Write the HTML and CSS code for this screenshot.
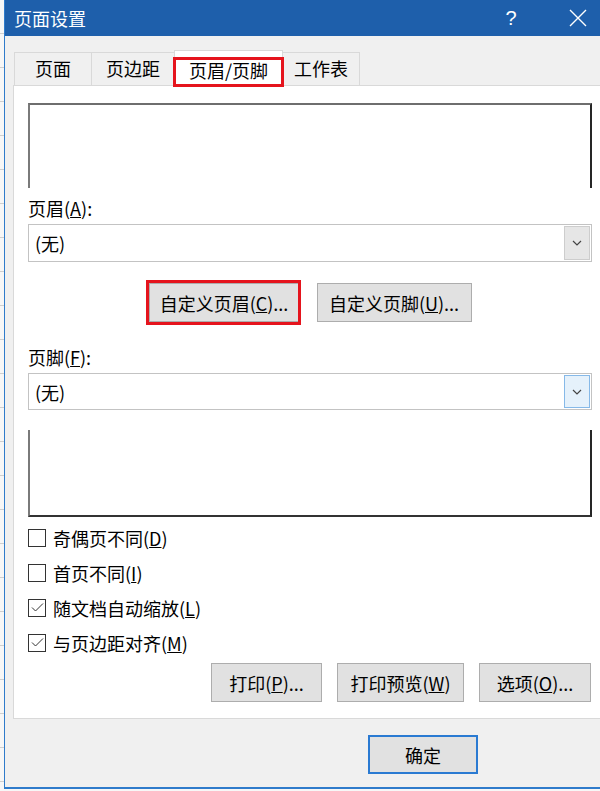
FILE: index.html
```html
<!DOCTYPE html>
<html lang="zh-CN">
<head>
    <meta charset="UTF-8">
    <meta name="viewport" content="width=device-width, initial-scale=1.0">
    <title>页面设置</title>
    <link rel="stylesheet" href="styles.css">
</head>
<body>
    <div class="dialog">
        <!-- Title bar -->
        <div class="titlebar">
            <span class="title">页面设置</span>
            <span class="title-btn help">?</span>
            <span class="title-btn close">
                <svg width="18" height="18" viewBox="0 0 18 18">
                    <path d="M1 1 L17 17 M17 1 L1 17" stroke="#fff" stroke-width="1.4" fill="none"/>
                </svg>
            </span>
        </div>

        <!-- Tabs -->
        <div class="tabs">
            <div class="tab tab-page">页面</div>
            <div class="tab tab-margin">页边距</div>
            <div class="tab tab-header active">页眉/页脚<span class="mark"></span></div>
            <div class="tab tab-sheet">工作表</div>
        </div>

        <div class="panel">
            <div class="preview preview-top"></div>

            <div class="field-label">页眉(<u>A</u>):</div>
            <div class="combo">
                <span class="combo-text">(无)</span>
                <span class="combo-btn">
                    <svg width="10" height="6" viewBox="0 0 10 6"><path d="M1 1 L5 5 L9 1" stroke="#444" stroke-width="1.2" fill="none"/></svg>
                </span>
            </div>

            <div class="custom-row">
                <button class="btn btn-head">自定义页眉(<u>C</u>)...<span class="mark"></span></button>
                <button class="btn btn-foot">自定义页脚(<u>U</u>)...</button>
            </div>

            <div class="field-label label-foot">页脚(<u>F</u>):</div>
            <div class="combo combo-foot">
                <span class="combo-text">(无)</span>
                <span class="combo-btn focused">
                    <svg width="10" height="6" viewBox="0 0 10 6"><path d="M1 1 L5 5 L9 1" stroke="#444" stroke-width="1.2" fill="none"/></svg>
                </span>
            </div>

            <div class="preview preview-bottom"></div>

            <div class="checks">
                <div class="check"><span class="box"></span>奇偶页不同(<u>D</u>)</div>
                <div class="check"><span class="box"></span>首页不同(<u>I</u>)</div>
                <div class="check"><span class="box"><svg width="15" height="15" viewBox="0 0 15 15"><path d="M2 7.5 L5.5 11 L13 3.5" stroke="#333" stroke-width="1" fill="none"/></svg></span>随文档自动缩放(<u>L</u>)</div>
                <div class="check"><span class="box"><svg width="15" height="15" viewBox="0 0 15 15"><path d="M2 7.5 L5.5 11 L13 3.5" stroke="#333" stroke-width="1" fill="none"/></svg></span>与页边距对齐(<u>M</u>)</div>
            </div>

            <div class="action-row">
                <button class="btn btn-print">打印(<u>P</u>)...</button>
                <button class="btn btn-preview">打印预览(<u>W</u>)</button>
                <button class="btn btn-options">选项(<u>O</u>)...</button>
            </div>
        </div>

        <div class="footer">
            <button class="btn btn-ok">确定</button>
        </div>
    </div>
</body>
</html>
```

FILE: styles.css
```css
body {
    margin: 0;
    width: 600px;
    height: 791px;
    overflow: hidden;
    font-family: "Noto Sans CJK SC", "Liberation Sans", sans-serif;
    font-size: 18px;
    color: #000;
    background: repeating-linear-gradient(to bottom, #f7f7f7 0, #f7f7f7 33px, #cfcfcf 33px, #cfcfcf 34px);
}

.dialog {
    margin-left: 4px;
    width: 610px;
    height: 789px;
    box-sizing: border-box;
    border-left: 1px solid #2f7bcb;
    border-bottom: 2px solid #2f7bcb;
    background-color: #f0f0f0;
}

/* title bar */
.titlebar {
    height: 36px;
    display: flex;
    align-items: center;
    padding: 0 13px 0 9px;
    background-color: #1e5fab;
    color: #fff;
}

.title {
    font-size: 18px;
    line-height: 36px;
}

.title-btn {
    width: 46px;
    height: 36px;
    display: flex;
    align-items: center;
    justify-content: center;
}

.help {
    margin-left: auto;
    font-family: "Liberation Sans", sans-serif;
    font-size: 20px;
}

.close {
    margin-left: 21px;
}

/* tabs */
.tabs {
    display: flex;
    align-items: flex-end;
    height: 36px;
    margin: 14px 0 0 9px;
}

.tab {
    position: relative;
    height: 33px;
    margin-bottom: 1px;
    margin-right: -1px;
    box-sizing: border-box;
    border: 1px solid #d9d9d9;
    border-bottom: none;
    background-color: #f0f0f0;
    text-align: center;
    line-height: 31px;
}

.tab-page { width: 78px; }
.tab-margin { width: 84px; }
.tab-header { width: 109px; }
.tab-sheet { width: 78px; }

.tab.active {
    z-index: 1;
    height: 36px;
    margin-bottom: 0;
    background-color: #fff;
    line-height: 38px;
}

.mark {
    position: absolute;
    box-sizing: border-box;
    border: 3px solid #e5141d;
    pointer-events: none;
}

.tab .mark {
    top: 6px;
    left: -2px;
    right: -2px;
    bottom: -1px;
}

/* tab panel */
.panel {
    width: 600px;
    margin: -1px 0 0 8px;
    box-sizing: border-box;
    padding: 17px 20px 16px 14px;
    border: 1px solid #d9d9d9;
    background-color: #fff;
}

.preview {
    height: 85px;
    box-sizing: border-box;
    border-left: 2px solid #7a7a7a;
    border-right: 2px solid #262626;
}

.preview-top {
    border-top: 2px solid #6e6e6e;
}

.preview-bottom {
    height: 87px;
    margin-top: 20px;
    border-bottom: 2px solid #333;
}

.field-label {
    margin-top: 8px;
    line-height: 24px;
}

.label-foot {
    margin-top: 23px;
}

.combo {
    display: flex;
    align-items: center;
    height: 38px;
    margin-top: 4px;
    box-sizing: border-box;
    border: 1px solid #c3c3c3;
    padding: 1px;
}

.combo-foot {
    height: 37px;
}

.combo-text {
    flex: 1;
    padding-left: 5px;
    line-height: 24px;
}

.combo-btn {
    width: 26px;
    align-self: stretch;
    box-sizing: border-box;
    display: flex;
    align-items: center;
    justify-content: center;
    border: 1px solid #cdcdcd;
    background-color: #e6e6e6;
}

.combo-btn.focused {
    border-color: #86b9e8;
    background-color: #e5f1fb;
}

/* buttons */
.btn {
    position: relative;
    height: 39px;
    box-sizing: border-box;
    padding: 0;
    border: 1px solid #adadad;
    background-color: #e1e1e1;
    font-family: inherit;
    font-size: 18px;
    color: #000;
}

.custom-row {
    display: flex;
    justify-content: center;
    gap: 17px;
    margin-top: 21px;
}

.btn-head { width: 151px; }
.btn-foot { width: 155px; }

.btn .mark {
    top: -4px;
    left: -4px;
    right: -2px;
    bottom: -4px;
}

/* checkboxes */
.checks {
    margin-top: 3px;
}

.check {
    display: flex;
    align-items: center;
    height: 35px;
}

.box {
    width: 18px;
    height: 18px;
    box-sizing: border-box;
    margin-right: 7px;
    border: 1px solid #333;
    background-color: #fff;
    display: flex;
    align-items: center;
    justify-content: center;
}

.action-row {
    display: flex;
    justify-content: flex-end;
    gap: 15px;
    margin-top: 3px;
    margin-right: 1px;
}

.btn-print { width: 111px; }
.btn-preview { width: 127px; }
.btn-options { width: 112px; }

/* dialog footer */
.footer {
    padding: 16px 0 0 363px;
}

.btn-ok {
    width: 110px;
    border: 2px solid #2a7ad2;
}
```
